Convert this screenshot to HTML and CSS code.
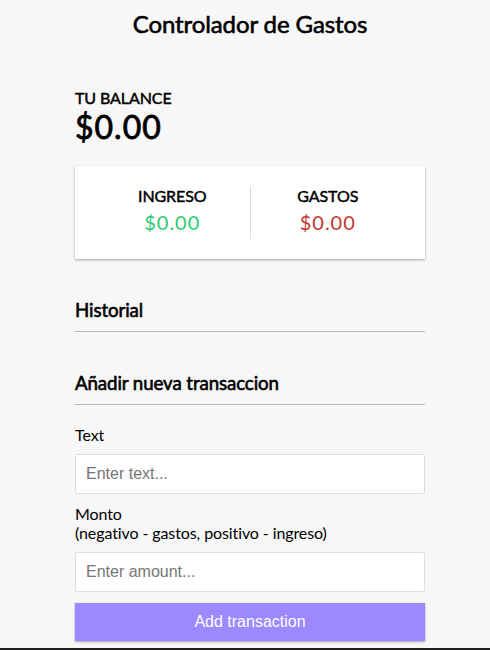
FILE: index.html
```html
<!DOCTYPE html>
<html lang="es">
<head>
<meta charset="utf-8">
<title>Controlador de Gastos</title>
<link rel="stylesheet" href="styles.css">
</head>
<body>
  <h2 class="title">Controlador de Gastos</h2>
  <div class="container">
    <h4>Tu Balance</h4>
    <h1 class="balance">$0.00</h1>
    <div class="inc-exp-container">
      <div>
        <h4>Ingreso</h4>
        <p class="money plus">$0.00</p>
      </div>
      <div>
        <h4>Gastos</h4>
        <p class="money minus">$0.00</p>
      </div>
    </div>
    <h3>Historial</h3>
    <ul class="list"></ul>
    <h3>Añadir nueva transaccion</h3>
    <form>
      <div class="form-control">
        <label for="text">Text</label>
        <input type="text" id="text" placeholder="Enter text...">
      </div>
      <div class="form-control">
        <label for="amount">Monto <br>(negativo - gastos, positivo - ingreso)</label>
        <input type="number" id="amount" placeholder="Enter amount...">
      </div>
      <button class="btn" type="button">Add transaction</button>
    </form>
  </div>
  <div class="edge"></div>
</body>
</html>
```
FILE: styles.css
```css
* {
  box-sizing: border-box;
}

html, body {
  overflow: hidden;
}

body {
  background-color: #f7f7f7;
  display: flex;
  flex-direction: column;
  align-items: center;
  margin: 0;
  padding-left: 10px;
  font-family: "Lato", sans-serif;
  font-size: 16px;
  letter-spacing: -0.1px;
  color: #000;
}

.title,
h1,
h3,
h4 {
  font-weight: 400;
  -webkit-text-stroke: 0.6px #000;
}

.title {
  font-size: 24px;
  margin: 9px 0 20px;
}

.container {
  margin: 30px auto;
  width: 350px;
}

h1 {
  letter-spacing: 1px;
  margin: 0;
  font-size: 32px;
  -webkit-text-stroke: 0.8px #000;
}

h3 {
  font-size: 18.72px;
  border-bottom: 1px solid #bbb;
  padding-bottom: 10px;
  margin: 40px 0 10px;
}

h4 {
  margin: 0;
  font-size: 16px;
  text-transform: uppercase;
  -webkit-text-stroke: 0.45px #000;
}

.inc-exp-container {
  background-color: #fff;
  box-shadow: 0 1px 3px rgba(0, 0, 0, 0.12), 0 1px 2px rgba(0, 0, 0, 0.24);
  padding: 20px;
  display: flex;
  justify-content: space-between;
  margin: 20px 0;
}

.inc-exp-container > div {
  flex: 1;
  text-align: center;
}

.inc-exp-container > div:first-of-type {
  border-right: 1px solid #dedede;
}

.money {
  font-size: 20px;
  letter-spacing: 1px;
  margin: 5px 0;
}

.money.plus {
  color: #2ecc71;
}

.money.minus {
  color: #c0392b;
}

.list {
  list-style: none;
  padding: 0;
  margin: 0 0 40px;
}

label {
  display: inline-block;
  margin: 10px 0;
}

input {
  border: 1px solid #dedede;
  border-radius: 2px;
  display: block;
  font-family: "Liberation Sans", Arial, sans-serif;
  font-size: 16px;
  letter-spacing: 0;
  padding: 10px;
  width: 100%;
  background: #fff;
}

input::placeholder {
  color: #767676;
}

.btn {
  background-color: #9c88ff;
  box-shadow: 0 1px 3px rgba(0, 0, 0, 0.12), 0 1px 2px rgba(0, 0, 0, 0.24);
  color: #fff;
  border: 0;
  display: block;
  font-family: "Liberation Sans", Arial, sans-serif;
  font-size: 16px;
  letter-spacing: 0;
  margin: 11px 0 30px;
  padding: 10px;
  width: 100%;
}

.edge {
  position: fixed;
  left: 0;
  right: 0;
  bottom: 0;
  height: 2px;
  background: #1e1e1e;
}
```
